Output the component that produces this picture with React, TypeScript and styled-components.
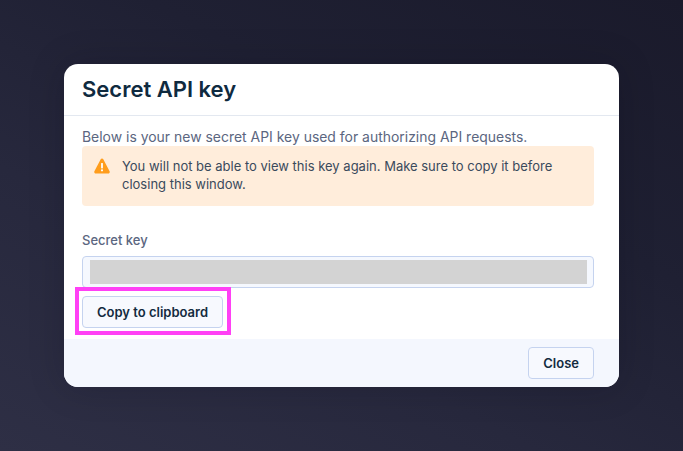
import styled, { createGlobalStyle } from 'styled-components';

const GlobalStyle = createGlobalStyle`
  html, body, #root {
    margin: 0;
    height: 100%;
  }
  body {
    font-family: Inter, "Liberation Sans", sans-serif;
  }
`;

const WarningIcon = () => (
  <svg width="16" height="16" viewBox="0 0 16 16" aria-hidden="true">
    <path
      d="M8 .4c.5 0 1 .3 1.300.8l6.300 12c.5 1-.2 2.200-1.300 2.200H1.700c-1.100 0-1.800-1.200-1.300-2.200l6.300-12c.3-.5.8-.8 1.300-.8z"
      fill="#ff9d1c"
    />
    <rect x="7.100" y="5" width="1.800" height="5.400" rx=".6" fill="#fff" />
    <circle cx="8" cy="12.300" r="1.100" fill="#fff" />
  </svg>
);

const App = () => {
  return (
    <>
      <GlobalStyle />
      <Backdrop>
        <Modal>
          <Header>
            <Title>Secret API key</Title>
          </Header>
          <Body>
            <Intro>Below is your new secret API key used for authorizing API requests.</Intro>
            <Warning>
              <WarningIconSlot>
                <WarningIcon />
              </WarningIconSlot>
              <WarningText>
                You will not be able to view this key again. Make sure to copy it before closing
                this window.
              </WarningText>
            </Warning>
            <Label>Secret key</Label>
            <KeyField>
              <Redacted />
            </KeyField>
            <CopyWrap>
              <Button>Copy to clipboard</Button>
            </CopyWrap>
          </Body>
          <Footer>
            <Button>Close</Button>
          </Footer>
        </Modal>
      </Backdrop>
    </>
  );
};

export default App;

const Backdrop = styled.div`
  height: 100%;
  display: flex;
  align-items: center;
  justify-content: center;
  background: linear-gradient(28deg, #2e2f45 0%, #27283d 35%, #1f2033 65%, #1a1a2b 100%);
`;

const Modal = styled.div`
  width: 555px;
  border-radius: 14px;
  background: #fff;
  overflow: hidden;
  box-shadow: 0 0 36px rgba(10, 10, 20, 0.18);
`;

const Header = styled.div`
  height: 51.500px;
  box-sizing: border-box;
  padding: 0 18px;
  display: flex;
  align-items: center;
  border-bottom: 1px solid #e3e8f0;
`;

const Title = styled.h2`
  margin: 0;
  font-size: 22px;
  font-weight: 600;
  color: #0f2a3f;
`;

const Body = styled.div`
  padding: 11.500px 25px 11px 18px;
`;

const Intro = styled.div`
  font-size: 13.950px;
  line-height: 19px;
  color: #5b6680;
`;

const Warning = styled.div`
  display: flex;
  align-items: flex-start;
  height: 60px;
  box-sizing: border-box;
  padding: 11px 12px;
  border-radius: 4px;
  background: #ffeddb;
`;

const WarningIconSlot = styled.div`
  width: 28px;
  padding-top: 1px;
  box-sizing: border-box;
  flex-shrink: 0;
`;

const WarningText = styled.div`
  font-size: 13px;
  line-height: 18px;
  color: #3a4a5c;
`;

const Label = styled.div`
  margin-top: 25.500px;
  font-size: 13px;
  line-height: 16px;
  font-weight: 500;
  color: #5b6680;
`;

const KeyField = styled.div`
  margin-top: 8.500px;
  height: 32px;
  box-sizing: border-box;
  padding: 3px 6px 3px 7px;
  border: 1px solid #c5d3ef;
  border-radius: 4px;
  background: #f5f8fe;
`;

const Redacted = styled.div`
  height: 100%;
  background: #d3d3d3;
`;

const CopyWrap = styled.div`
  position: relative;
  width: fit-content;
  margin-top: 8px;

  &::after {
    content: '';
    position: absolute;
    inset: -9px -8px -7px -7px;
    border: 4px solid #ff40f5;
    pointer-events: none;
  }
`;

const Button = styled.button`
  display: block;
  height: 32px;
  padding: 0 14px;
  border: 1px solid #c5d3ef;
  border-radius: 4px;
  background: #f7f9fe;
  font-family: inherit;
  font-size: 13px;
  font-weight: 600;
  color: #132b3f;
`;

const Footer = styled.div`
  display: flex;
  justify-content: flex-end;
  padding: 8px 25px 8px 18px;
  background: #f4f7fe;
`;
